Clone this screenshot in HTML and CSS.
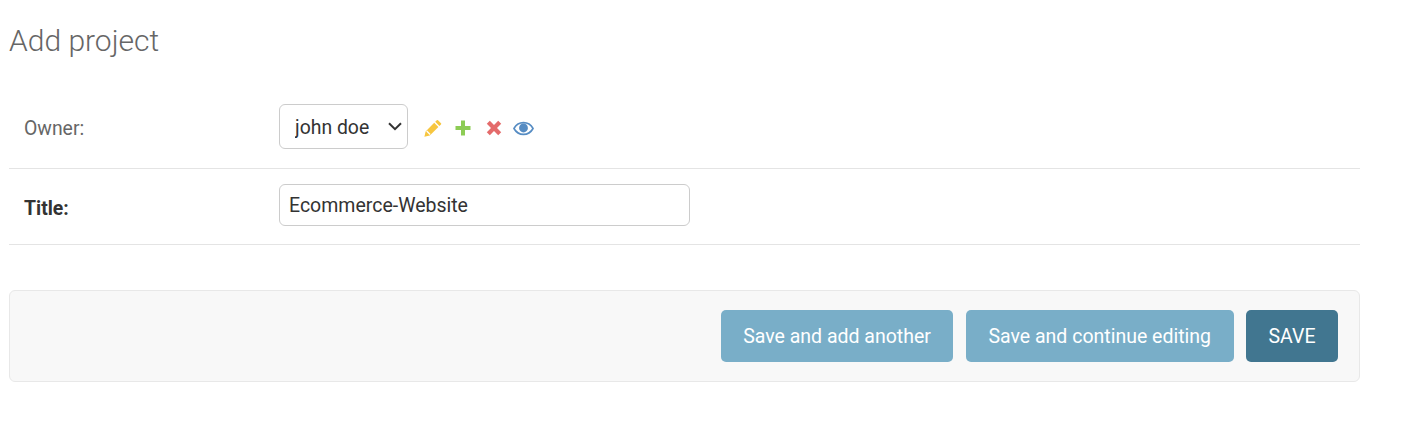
FILE: index.html
```html
<!DOCTYPE html>
<html lang="en">
  <head>
    <meta charset="UTF-8" />
    <title>Add project</title>
    <link rel="stylesheet" href="styles.css">
  </head>

  <body>
    <div class="content">
      <h1>Add project</h1>

      <form>
        <div class="form-row">
          <label for="id_owner">Owner:</label>
          <div class="select-wrap">
            <select id="id_owner" name="owner">
              <option>john doe</option>
            </select>
            <svg class="select-arrow" viewBox="0 0 14 9" aria-hidden="true">
              <path fill="none" stroke="#333" stroke-width="2" d="M1 1.200l6 6 6-6"/>
            </svg>
          </div>
          <div class="related-links">
            <svg class="icon" viewBox="0 0 18 18" aria-hidden="true">
              <path fill="#f5b80f" fill-opacity="0.8" d="M14 1.200l3 3a.9.9 0 0 1 0 1.200l-1.600 1.600-4.200-4.200 1.600-1.600a.9.9 0 0 1 1.200 0zM10.200 3.800l4.200 4.200-8.600 8.600-5.400 1.200 1.200-5.400z"/>
              <path fill="#fff" d="M3.100 11.600l3.500 3.500-.9.900-3.500-3.500z"/>
            </svg>
            <svg class="icon icon-small" viewBox="0 0 16 16" aria-hidden="true">
              <path fill="#70bf2b" fill-opacity="0.8" d="M6 .5h4V6h5.500v4H10v5.500H6V10H.5V6H6z"/>
            </svg>
            <svg class="icon icon-small icon-delete" viewBox="0 0 16 16" aria-hidden="true">
              <path fill="#dd4646" fill-opacity="0.8" d="M3.800.8L8 5l4.200-4.200 3 3L11 8l4.200 4.200-3 3L8 11l-4.200 4.200-3-3L5 8 .8 3.800z"/>
            </svg>
            <svg class="icon icon-eye" viewBox="0 0 20 14" aria-hidden="true">
              <path fill="none" stroke="#447fbd" stroke-opacity="0.9" stroke-width="1.500" d="M.9 7C3 3.200 6.200 1.400 10 1.400S17 3.200 19.100 7c-2.100 3.800-5.300 5.600-9.100 5.600S3 10.800.9 7z"/>
              <circle fill="#447fbd" fill-opacity="0.9" cx="10" cy="6.500" r="4.200"/>
            </svg>
          </div>
        </div>

        <div class="form-row title-row">
          <label class="required" for="id_title">Title:</label>
          <input type="text" id="id_title" name="title" value="Ecommerce-Website" />
        </div>

        <div class="submit-row">
          <button type="button" class="btn">Save and add another</button>
          <button type="button" class="btn">Save and continue editing</button>
          <button type="button" class="btn btn-default">SAVE</button>
        </div>
      </form>
    </div>
  </body>
</html>
```

FILE: styles.css
```css
* {
  margin: 0;
  padding: 0;
  box-sizing: border-box;
  font-family: Roboto, sans-serif;
}

body {
  background-color: #fff;
  color: #333;
}

.content {
  width: 1351px;
  margin-left: 9px;
  padding-top: 21px;
}

h1 {
  font-size: 30px;
  font-weight: 300;
  line-height: 40px;
  color: #666;
  margin-bottom: 31px;
}

.form-row {
  display: flex;
  align-items: flex-start;
  height: 77px;
  padding: 12px 0 0 15px;
  border-bottom: 1px solid #e4e4e4;
}

.title-row {
  height: 76px;
  padding-top: 15px;
}

label {
  width: 255px;
  font-size: 19.4px;
  line-height: 22px;
  color: #666;
  padding-top: 14px;
}

label.required {
  font-weight: 700;
  color: #333;
}

.select-wrap {
  position: relative;
  height: 45px;
}

select {
  width: 129px;
  height: 45px;
  border: 1px solid #ccc;
  border-radius: 6px;
  padding: 2px 0 0 15px;
  background-color: #fff;
  font-size: 19.4px;
  color: #333;
  appearance: none;
}

.select-arrow {
  position: absolute;
  top: 18px;
  right: 6px;
  width: 14px;
  height: 9px;
  pointer-events: none;
}

input {
  width: 411px;
  height: 42px;
  border: 1px solid #ccc;
  border-radius: 6px;
  padding: 0 9px;
  font-size: 19.5px;
  color: #333;
}

.related-links {
  display: flex;
  align-items: center;
  gap: 13px;
  height: 48px;
  margin-left: 16px;
}

.icon {
  width: 18px;
  height: 18px;
}

.icon-small {
  width: 16px;
  height: 16px;
}

.icon-delete {
  margin: 0 2px;
}

.icon-eye {
  width: 21px;
  height: 15px;
  margin-left: -4px;
}

.submit-row {
  display: flex;
  justify-content: flex-end;
  gap: 12.5px;
  height: 92px;
  margin-top: 45px;
  padding: 19px 21px 0 0;
  background-color: #f8f8f8;
  border: 1px solid #e8e8e8;
  border-radius: 6px;
}

.btn {
  height: 52px;
  padding: 0 22.5px;
  border: none;
  border-radius: 5px;
  font-size: 19.5px;
  color: #fff;
  background-color: #79aec8;
}

.btn-default {
  background-color: #417690;
}
```
